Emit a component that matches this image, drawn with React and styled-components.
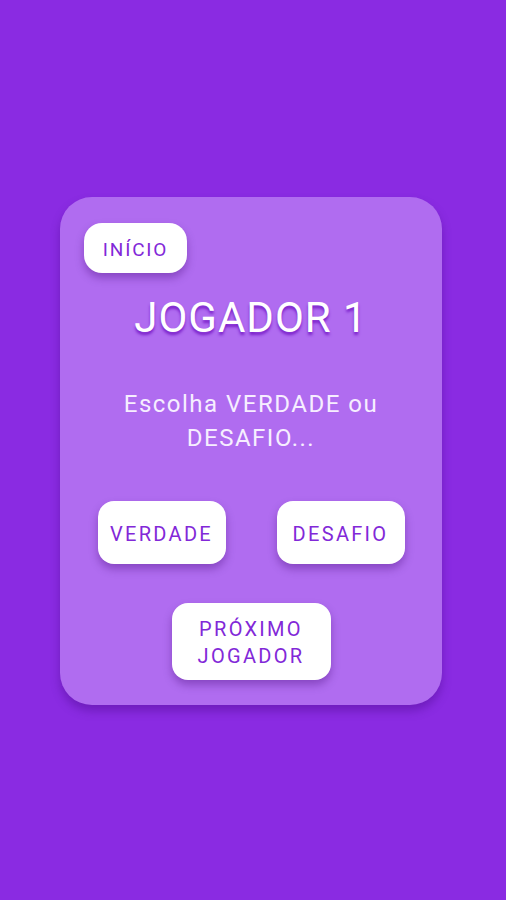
import React from 'react';
import styled, { createGlobalStyle } from 'styled-components';

const GlobalStyle = createGlobalStyle`
  html, body {
    margin: 0;
    padding: 0;
    background-color: #8a2be2;
  }
  body {
    font-family: Roboto, "Liberation Sans", sans-serif;
  }
`;

const Screen = styled.div`
  width: 100%;
  height: 900px;
  box-sizing: border-box;
  padding-top: 2px;
  display: flex;
  align-items: center;
  justify-content: center;
  background-color: #8a2be2;
`;

const Card = styled.div`
  width: 382px;
  box-sizing: border-box;
  padding: 26px 24px 25px 24px;
  margin-left: -4px;
  display: flex;
  flex-direction: column;
  align-items: center;
  background-color: #b06cf0;
  border-radius: 32px;
  box-shadow: 0px 6px 10px rgba(60, 0, 120, 0.35);
`;

const Button = styled.button`
  border: none;
  background-color: #fff;
  color: #8228d8;
  font-family: Roboto, "Liberation Sans", sans-serif;
  font-size: ${(p) => p.$size || 20}px;
  font-weight: 400;
  letter-spacing: ${(p) => p.$ls || 2.3}px;
  line-height: 27px;
  border-radius: 16px;
  padding: 3px 0 0 0;
  width: ${(p) => p.$w}px;
  height: ${(p) => p.$h}px;
  box-shadow: 0px 5px 8px rgba(60, 0, 110, 0.35);
  cursor: pointer;
`;

const HomeButton = styled(Button)`
  align-self: flex-start;
  border-radius: 18px;
`;

const Title = styled.h1`
  margin: 21px 0 0 0;
  font-size: 42px;
  line-height: 48px;
  font-weight: 400;
  letter-spacing: 1px;
  color: #fff;
  text-shadow: 0px 3px 3px #7a1fc9;
`;

const Message = styled.p`
  margin: 45px 0 0 0;
  width: 290px;
  font-size: 24px;
  line-height: 34px;
  letter-spacing: 1.5px;
  text-align: center;
  color: #f6eeff;
`;

const ChoiceRow = styled.div`
  margin-top: 46px;
  display: flex;
  gap: 51px;
`;

const NextRow = styled.div`
  margin-top: 39px;
  display: flex;
  justify-content: center;
`;

const App = () => {
  return (
    <>
      <GlobalStyle />
      <Screen>
        <Card>
          <HomeButton $w={103} $h={50} $size={19} $ls={1.8}>INÍCIO</HomeButton>
          <Title>JOGADOR 1</Title>
          <Message>Escolha VERDADE ou DESAFIO...</Message>
          <ChoiceRow>
            <Button $w={128} $h={63}>VERDADE</Button>
            <Button $w={128} $h={63}>DESAFIO</Button>
          </ChoiceRow>
          <NextRow>
            <Button $w={159} $h={77}>PRÓXIMO<br />JOGADOR</Button>
          </NextRow>
        </Card>
      </Screen>
    </>
  );
};

export default App;
